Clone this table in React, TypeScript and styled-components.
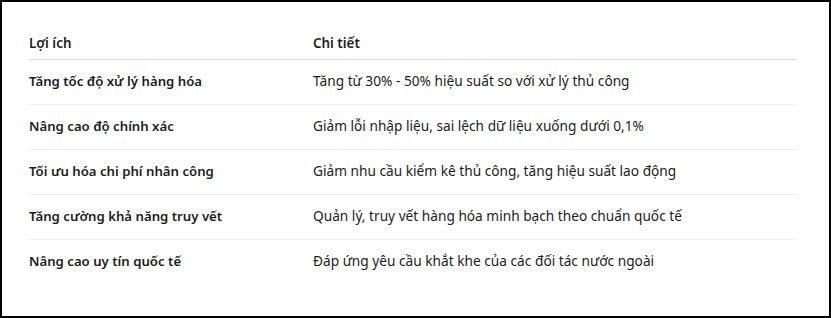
import React from "react";
import styled, { createGlobalStyle } from "styled-components";

const Global = createGlobalStyle`
  html, body { margin: 0; padding: 0; background: #fff; }
  body { font-family: "Noto Sans", "Open Sans", sans-serif; }
`;

const Frame = styled.div`
  box-sizing: border-box;
  width: 831px;
  height: 318px;
  border: 2px solid #000;
  background: #fff;
  padding: 23px 32px 0 27px;
`;

const Table = styled.div`
  display: grid;
  grid-template-columns: 284px 1fr;
  color: #1c1c1c;
  font-size: 13.7px;
  line-height: 20px;
`;

const HeadCell = styled.div`
  font-weight: 600;
  font-size: 13.4px;
  padding: 8px 0 6px;
  border-bottom: 1px solid #d9d9d9;
`;

const Cell = styled.div<{ $strong?: boolean; $last?: boolean }>`
  font-weight: ${(p) => (p.$strong ? 600 : 400)};
  font-size: ${(p) => (p.$strong ? "13.2px" : "13.7px")};
  padding: 11px 0 13px;
  border-bottom: ${(p) => (p.$last ? "none" : "1px solid #efefef")};
`;

const rows: [string, string][] = [
  ["Tăng tốc độ xử lý hàng hóa", "Tăng từ 30% - 50% hiệu suất so với xử lý thủ công"],
  ["Nâng cao độ chính xác", "Giảm lỗi nhập liệu, sai lệch dữ liệu xuống dưới 0,1%"],
  ["Tối ưu hóa chi phí nhân công", "Giảm nhu cầu kiểm kê thủ công, tăng hiệu suất lao động"],
  ["Tăng cường khả năng truy vết", "Quản lý, truy vết hàng hóa minh bạch theo chuẩn quốc tế"],
  ["Nâng cao uy tín quốc tế", "Đáp ứng yêu cầu khắt khe của các đối tác nước ngoài"],
];

export default function App() {
  return (
    <>
      <Global />
      <Frame>
        <Table>
          <HeadCell>Lợi ích</HeadCell>
          <HeadCell>Chi tiết</HeadCell>
          {rows.map(([a, b], i) => (
            <React.Fragment key={a}>
              <Cell $strong $last={i === rows.length - 1}>{a}</Cell>
              <Cell $last={i === rows.length - 1}>{b}</Cell>
            </React.Fragment>
          ))}
        </Table>
      </Frame>
    </>
  );
}
